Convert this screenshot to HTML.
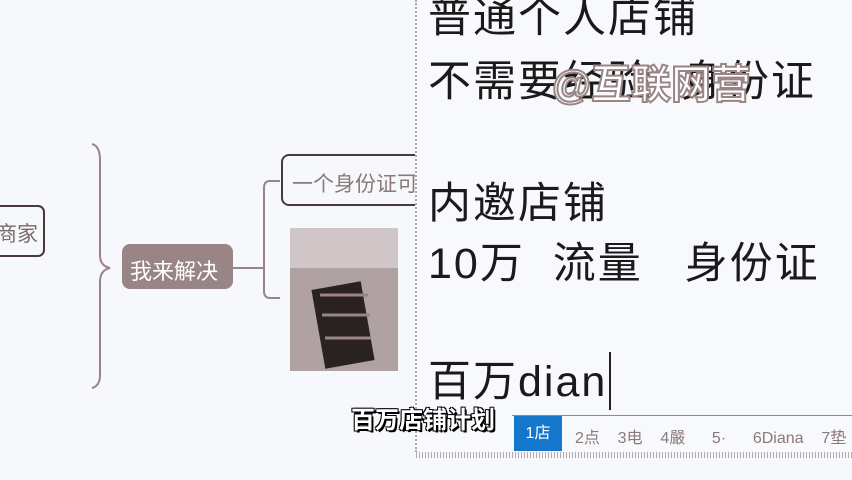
<!DOCTYPE html>
<html><head><meta charset="utf-8"><style>
body{margin:0;width:852px;height:480px;overflow:hidden;background:#f7f8fc;position:relative;font-family:"Liberation Sans","Noto Sans CJK SC",sans-serif}
.abs{position:absolute}
.t{position:absolute;left:428px;font-size:43px;color:#1a1a1a;letter-spacing:2px;white-space:pre;line-height:1}
</style></head><body>
<svg class="abs" style="left:0;top:0" width="420" height="480">
<path d="M92 144 Q100 146 100 160 L100 255 Q100 266 110 268 Q100 270 100 282 L100 375 Q100 386 92 388" fill="none" stroke="#9a8586" stroke-width="2"/>
<path d="M233 268 L263 268 M280 181 L270 181 Q264 181 264 188 L264 291 Q264 298 270 298 L280 298" fill="none" stroke="#9a8586" stroke-width="2"/>
<rect x="-10" y="206" width="54" height="50" rx="6" fill="none" stroke="#4a3a3a" stroke-width="2"/>
<rect x="282" y="155" width="150" height="50" rx="7" fill="none" stroke="#4a3a3a" stroke-width="2"/>
<rect x="122" y="244" width="111" height="45" rx="8" fill="#9a8586"/>
<rect x="290" y="228" width="108" height="143" fill="#b0a2a3"/>
<rect x="290" y="228" width="108" height="40" fill="#d0c6c7"/>
<rect x="318" y="285" width="50" height="80" fill="#2a2222" transform="rotate(-10 343 325)"/>
<path d="M320 295 h48 M322 315 h48 M325 338 h46" stroke="#9a8586" stroke-width="3"/>
</svg>
<div class="abs" style="left:-4px;top:218px;font-size:21px;color:#7a6a6a">商家</div>
<div class="abs" style="left:292px;top:168px;font-size:21px;color:#8a7a7a;white-space:nowrap">一个身份证可</div>
<div class="abs" style="left:130px;top:254px;font-size:22px;color:#fff">我来解决</div>
<div class="abs" style="left:415px;top:0;width:437px;height:452px;background:#f8f9fd;border-left:2px dotted #b0a8a8"></div>
<div class="abs" style="left:416px;top:452px;width:436px;height:6px;background:repeating-linear-gradient(90deg,#b8a8a8 0 1px,transparent 1px 3px)"></div>
<div class="t" style="top:-3px">普通个人店铺</div>
<div class="t" style="top:61px">不需要经验  身份证</div>
<div class="abs" style="left:552px;top:52px;font-size:40px;color:#fff;-webkit-text-stroke:2px #9a8586;font-weight:bold;white-space:nowrap">@互联网营</div>
<div class="t" style="top:183px">内邀店铺</div>
<div class="t" style="top:243px">10万  流量   身份证</div>
<div class="t" style="top:361px">百万dian</div>
<div class="abs" style="left:609px;top:352px;width:2px;height:58px;background:#222"></div>
<div class="abs" style="left:512px;top:415px;width:340px;height:36px;border-top:1px solid #9a8586;background:#f8f9fd"></div>
<div class="abs" style="left:514px;top:416px;width:48px;height:35px;background:#1477cc;color:#fff;font-size:16px;line-height:35px;text-align:center">1店</div>
<div class="abs" style="left:575px;top:424px;font-size:16px;color:#8a7a7a;white-space:pre">2点    3电    4嚴      5·      6Diana    7垫</div>
<div class="abs" style="left:351px;top:400px;font-size:24px;font-weight:bold;color:#fff;white-space:nowrap;text-shadow:1px 1px 0 #000,-1px -1px 0 #000,1px -1px 0 #000,-1px 1px 0 #000,2px 2px 0 #000">百万店铺计划</div>
</body></html>
